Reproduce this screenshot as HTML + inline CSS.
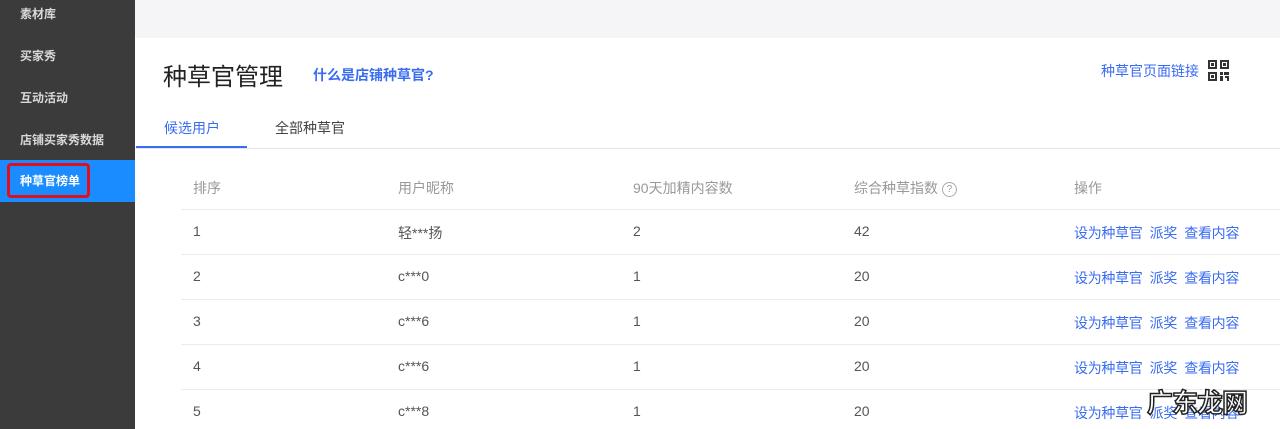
<!DOCTYPE html>
<html><head><meta charset="utf-8"><style>
*{margin:0;padding:0;box-sizing:border-box}
body{width:1280px;height:429px;overflow:hidden;background:#fff;font-family:"Liberation Sans","Noto Sans CJK SC",sans-serif;position:relative}
.sb{position:absolute;left:0;top:0;width:135px;height:429px;background:#3b3b3b}
.sb div{position:absolute;left:20px;color:#d8d8d8;font-size:12px;font-weight:bold}
.act{position:absolute;left:0;top:160px;width:135px;height:42px;background:#1a8cff}
.redbox{position:absolute;left:7px;top:163px;width:83px;height:35px;border:3px solid #e0101a;border-radius:4px}
.top{position:absolute;left:135px;top:0;width:1145px;height:38px;background:#f5f5f7}
.a{position:absolute;white-space:nowrap}
.blue{color:#3a6cf0}
.hd{color:#999;font-size:14px}
.cell{color:#555;font-size:14px}
.op{color:#3a6cf0;font-size:14px;letter-spacing:-0.3px}
.line{position:absolute;left:181px;width:1099px;height:1px;background:#ebebeb}
</style></head><body>
<div class="sb">
<div style="top:5px">素材库</div>
<div style="top:47px">买家秀</div>
<div style="top:89px">互动活动</div>
<div style="top:131px">店铺买家秀数据</div>
</div>
<div class="act"></div><div class="redbox"></div>
<div class="a" style="left:20px;top:172px;color:#fff;font-size:12px;font-weight:bold">种草官榜单</div>
<div class="top"></div>
<div class="a" style="left:163px;top:57px;font-size:24px;color:#222">种草官管理</div>
<div class="a blue" style="left:313px;top:65px;font-size:14px;font-weight:bold">什么是店铺种草官?</div>
<div class="a blue" style="left:1101px;top:61px;font-size:14px">种草官页面链接</div>
<svg class="a" style="left:1208px;top:60px" width="21" height="21" viewBox="0 0 21 21" fill="#333"><path d="M0 0h9v9H0zM2 2v5h5V2zM3 3h3v3H3zM12 0h9v9h-9zM14 2v5h5V2zM15 3h3v3h-3zM0 12h9v9H0zM2 14v5h5v-5zM3 15h3v3H3zM12 12h3v3h-3zM16 12h5v3h-5zM12 16h3v5h-3zM17 16h4v5h-2v-3h-2z"/></svg>
<div class="a blue" style="left:164px;top:118px;font-size:14px">候选用户</div>
<div class="a" style="left:275px;top:118px;font-size:14px;color:#444">全部种草官</div>
<div class="a" style="left:135px;top:148px;width:1145px;height:1px;background:#e6e6e6"></div>
<div class="a" style="left:136px;top:146px;width:111px;height:2px;background:#3a6cf0"></div>
<div class="a hd" style="left:193px;top:178px">排序</div>
<div class="a hd" style="left:398px;top:178px">用户昵称</div>
<div class="a hd" style="left:633px;top:178px">90天加精内容数</div>
<div class="a hd" style="left:854px;top:178px">综合种草指数 <span style="display:inline-block;width:15px;height:15px;border:1px solid #aaa;border-radius:50%;font-size:10px;text-align:center;line-height:13px;vertical-align:1px">?</span></div>
<div class="a hd" style="left:1074px;top:178px">操作</div>
<div class="line" style="top:209px"></div>
<div class="line" style="top:254px"></div>
<div class="line" style="top:299px"></div>
<div class="line" style="top:344px"></div>
<div class="line" style="top:389px"></div>

<div class="a cell" style="left:193px;top:223px">1</div><div class="a cell" style="left:398px;top:223px">轻***扬</div><div class="a cell" style="left:633px;top:223px">2</div><div class="a cell" style="left:854px;top:223px">42</div><div class="a op" style="left:1074px;top:223px">设为种草官&nbsp; 派奖&nbsp; 查看内容</div>
<div class="a cell" style="left:193px;top:268px">2</div><div class="a cell" style="left:398px;top:268px">c***0</div><div class="a cell" style="left:633px;top:268px">1</div><div class="a cell" style="left:854px;top:268px">20</div><div class="a op" style="left:1074px;top:268px">设为种草官&nbsp; 派奖&nbsp; 查看内容</div>
<div class="a cell" style="left:193px;top:313px">3</div><div class="a cell" style="left:398px;top:313px">c***6</div><div class="a cell" style="left:633px;top:313px">1</div><div class="a cell" style="left:854px;top:313px">20</div><div class="a op" style="left:1074px;top:313px">设为种草官&nbsp; 派奖&nbsp; 查看内容</div>
<div class="a cell" style="left:193px;top:358px">4</div><div class="a cell" style="left:398px;top:358px">c***6</div><div class="a cell" style="left:633px;top:358px">1</div><div class="a cell" style="left:854px;top:358px">20</div><div class="a op" style="left:1074px;top:358px">设为种草官&nbsp; 派奖&nbsp; 查看内容</div>
<div class="a cell" style="left:193px;top:403px">5</div><div class="a cell" style="left:398px;top:403px">c***8</div><div class="a cell" style="left:633px;top:403px">1</div><div class="a cell" style="left:854px;top:403px">20</div><div class="a op" style="left:1074px;top:403px">设为种草官&nbsp; 派奖&nbsp; 查看内容</div>
<div class="a" style="left:1147px;top:383px;font-size:26px;font-weight:bold;color:#fff;-webkit-text-stroke:1.5px #222;letter-spacing:-1px">广东龙网</div>
</body></html>
